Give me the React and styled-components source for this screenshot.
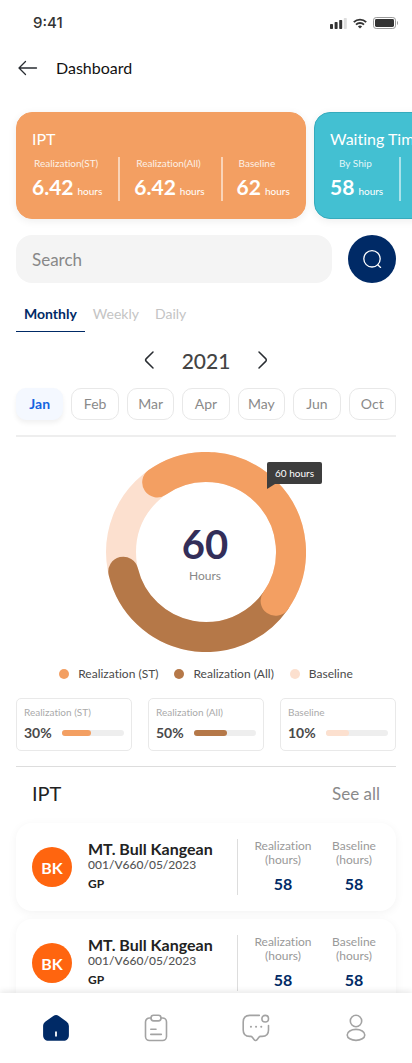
import React, { useState } from "react";
import styled, { createGlobalStyle } from "styled-components";

const GlobalStyle = createGlobalStyle`
  *, *::before, *::after { box-sizing: border-box; }
  body { margin: 0; background: #fff; font-variant-ligatures: none; }
  body, button, input { font-family: Lato, "Liberation Sans", sans-serif; }
  h1, h2, h3, p, ul, figure { margin: 0; padding: 0; font-weight: 400; }
  ul { list-style: none; }
  button { border: 0; background: none; padding: 0; cursor: pointer; color: inherit; }
  svg { display: block; }
`;

const NAVY = "#002a66";
const ORANGE = "#f39f62";
const BROWN = "#b57848";
const PEACH = "#fce0cf";

const Screen = styled.div`
  height: 100vh;
  display: flex;
  flex-direction: column;
  overflow: hidden;
`;

const StatusBar = styled.div`
  display: flex;
  justify-content: space-between;
  align-items: center;
  height: 46px;
  padding: 0 14px 0 33px;
  color: #333;
  font: 500 15px/20px Inter, sans-serif;
  flex: none;
`;

const StatusIcons = styled.div`
  display: flex;
  align-items: center;
  gap: 6px;
`;

const Header = styled.header`
  display: flex;
  align-items: center;
  gap: 18px;
  height: 44px;
  padding: 0 18px;
  flex: none;
`;

const Title = styled.h1`
  font-size: 16px;
  line-height: 24px;
  color: #111;
`;

const Content = styled.main`
  flex: 1;
  min-height: 0;
  overflow-y: auto;
  scrollbar-width: none;
  display: flex;
  flex-direction: column;
  padding: 10px 0 16px;
  & > * { flex: none; }
`;

const Cards = styled.section`
  display: flex;
  gap: 8px;
  overflow-x: auto;
  scrollbar-width: none;
  padding: 12px 16px;
`;

const SummaryCard = styled.article`
  flex: none;
  min-width: 290px;
  height: 107px;
  padding: 14px 15px;
  border-radius: 16px;
  color: #fff;
  background: ${(p) => p.$color};
  border: 1px solid ${(p) => p.$edge};
  box-shadow: 0 2px 8px rgba(0, 0, 0, 0.07);
`;

const CardTitle = styled.h2`
  font-size: 16px;
  line-height: 24px;
`;

const Metrics = styled.div`
  display: flex;
  margin-top: 6px;
`;

const Metric = styled.div`
  height: 44px;
  padding-right: 16px;
  & + & {
    border-left: 2px solid rgba(255, 255, 255, 0.55);
    padding-left: 14px;
  }
  &:last-child { padding-right: 0; }
`;

const MetricLabel = styled.p`
  font-size: 10px;
  line-height: 12px;
  padding-left: ${(p) => p.$indent || 2}px;
  opacity: 0.85;
`;

const MetricValue = styled.p`
  display: flex;
  align-items: baseline;
  gap: 4px;
  margin-top: 6px;
  font-size: 10px;
  line-height: 24px;
  white-space: nowrap;
  strong { font-size: 21px; font-weight: 700; }
`;

const SearchRow = styled.form`
  display: flex;
  gap: 16px;
  padding: 4px 16px 0;
`;

const SearchInput = styled.input`
  flex: 1;
  min-width: 0;
  height: 48px;
  padding: 0 16px;
  border: 0;
  border-radius: 16px;
  background: #f4f4f4;
  font-size: 17px;
  color: #444;
  outline: none;
  &::placeholder { color: #888; opacity: 1; }
`;

const SearchButton = styled.button`
  display: grid;
  place-items: center;
  width: 48px;
  height: 48px;
  border-radius: 50%;
  background: ${NAVY};
`;

const Tabs = styled.div`
  display: flex;
  padding: 14px 16px 0;
`;

const Tab = styled.button`
  height: 35px;
  padding: 0 8px;
  font-size: 14px;
  line-height: 34px;
  font-weight: ${(p) => (p.$active ? 700 : 400)};
  color: ${(p) => (p.$active ? NAVY : "#c4c4c4")};
  border-bottom: 1px solid ${(p) => (p.$active ? NAVY : "transparent")};
`;

const YearPicker = styled.div`
  display: flex;
  align-items: center;
  justify-content: center;
  gap: 27px;
  height: 56px;
`;

const Year = styled.span`
  font-size: 21px;
  font-weight: 500;
  color: #444;
`;

const Months = styled.div`
  display: grid;
  grid-template-columns: repeat(7, 1fr);
  gap: 8px;
  margin: 0 16px;
  padding-bottom: 15px;
  border-bottom: 2px solid #eee;
`;

const Month = styled.button`
  height: 32px;
  border-radius: 10px;
  padding-bottom: 2px;
  font-size: 14px;
  font-weight: ${(p) => (p.$active ? 700 : 400)};
  color: ${(p) => (p.$active ? "#1463e0" : "#8a8a8a")};
  background: ${(p) => (p.$active ? "#f4f8ff" : "#fff")};
  border: 1px solid ${(p) => (p.$active ? "#f4f8ff" : "#e8e8e8")};
  box-shadow: ${(p) => (p.$active ? "0 3px 5px rgba(0, 0, 0, 0.06)" : "none")};
`;

const Donut = styled.figure`
  position: relative;
  align-self: center;
  width: 200px;
  height: 200px;
  margin-top: 15px;
`;

const DonutCenter = styled.figcaption`
  position: absolute;
  inset: 0;
  display: flex;
  flex-direction: column;
  align-items: center;
  justify-content: center;
  padding-right: 2px;
  font-size: 12px;
  line-height: 16px;
  color: #888;
  strong { font-size: 40px; line-height: 48px; color: #332e59; }
`;

const Tooltip = styled.div`
  position: absolute;
  left: 161px;
  top: 10px;
  width: 55px;
  height: 22px;
  border-radius: 2px 2px 2px 0;
  background: #3d3d3d;
  color: #fff;
  font-size: 10px;
  line-height: 22px;
  text-align: center;
  &::after {
    content: "";
    position: absolute;
    left: 0;
    top: 100%;
    border-top: 5px solid #3d3d3d;
    border-right: 8px solid transparent;
  }
`;

const Legend = styled.ul`
  display: flex;
  justify-content: center;
  gap: 16px;
  padding-top: 14px;
  font-size: 12px;
  line-height: 16px;
  color: #4a4a4a;
  li { display: flex; align-items: center; gap: 9px; }
`;

const Dot = styled.span`
  width: 10px;
  height: 10px;
  border-radius: 50%;
  background: ${(p) => p.$color};
`;

const Stats = styled.section`
  display: grid;
  grid-template-columns: repeat(3, 1fr);
  gap: 16px;
  margin: 16px 16px 0;
  padding-bottom: 15px;
  border-bottom: 1px solid #ddd;
`;

const StatCard = styled.div`
  height: 53px;
  padding: 6px 7px;
  border: 1px solid #e9e9e9;
  border-radius: 5px;
`;

const StatLabel = styled.p`
  font-size: 10px;
  line-height: 14px;
  color: #aaa;
`;

const StatRow = styled.div`
  display: flex;
  align-items: center;
  gap: 8px;
  margin-top: 4px;
  font-size: 14px;
  line-height: 20px;
  color: #4a4a4a;
  strong { min-width: 30px; }
`;

const Track = styled.div`
  flex: 1;
  height: 6px;
  border-radius: 3px;
  background: #eee;
`;

const Fill = styled.div`
  height: 100%;
  border-radius: 3px;
  background: ${(p) => p.$color};
`;

const ListHeader = styled.div`
  display: flex;
  justify-content: space-between;
  align-items: center;
  height: 56px;
  padding: 0 32px 4px;
  h2 { font-size: 20px; color: #222; }
`;

const SeeAll = styled.a`
  font-size: 17px;
  color: #8a8a8a;
  text-decoration: none;
`;

const ShipList = styled.ul`
  display: flex;
  flex-direction: column;
  gap: 8px;
  padding: 0 16px;
`;

const ShipCard = styled.li`
  display: flex;
  align-items: center;
  height: 88px;
  padding: 0 16px;
  border-radius: 16px;
  background: #fff;
  box-shadow: 0 2px 10px rgba(0, 0, 0, 0.05);
`;

const Avatar = styled.div`
  display: grid;
  place-items: center;
  width: 40px;
  height: 40px;
  border-radius: 50%;
  background: #ff650f;
  color: #fff;
  font-size: 16px;
  font-weight: 700;
  flex: none;
`;

const ShipInfo = styled.div`
  flex: 1;
  padding: 0 0 2px 16px;
  white-space: nowrap;
  color: #222;
  h3 { font-size: 16px; line-height: 17px; font-weight: 700; }
  p { font-size: 12px; line-height: 16px; color: #555; font-weight: 500; }
  strong { display: block; margin-top: 2px; font-size: 12px; line-height: 18px; }
`;

const Readings = styled.div`
  display: flex;
  gap: 15px;
  height: 56px;
  padding-left: 15px;
  border-left: 1px solid #ddd;
`;

const Reading = styled.div`
  width: ${(p) => p.$width}px;
  text-align: center;
  font-size: 12px;
  line-height: 14px;
  color: #999;
  strong { display: block; margin-top: 7px; font-size: 16px; line-height: 20px; color: ${NAVY}; }
`;

const BottomNav = styled.nav`
  position: relative;
  display: flex;
  flex: none;
  height: 70px;
  padding: 0 6px;
  background: #fff;
  box-shadow: 0 -2px 6px rgba(0, 0, 0, 0.09);
`;

const NavItem = styled.button`
  flex: 1;
  display: grid;
  place-items: center;
`;

const cards = [
  {
    title: "IPT", color: ORANGE, edge: ORANGE,
    metrics: [["Realization(ST)", "6.42"], ["Realization(All)", "6.42"], ["Baseline", "62"]],
  },
  {
    title: "Waiting Time", color: "#43c0d2", edge: "#35abbd",
    metrics: [["By Ship", "58", 9]],
  },
];

const series = [
  { name: "Realization (ST)", percent: "30%", fill: 47, color: ORANGE },
  { name: "Realization (All)", percent: "50%", fill: 53, color: BROWN },
  { name: "Baseline", percent: "10%", fill: 37, color: PEACH },
];

const ships = [1, 2].map((id) => ({
  id, initials: "BK", name: "MT. Bull Kangean", code: "001/V660/05/2023", type: "GP", realization: 58, baseline: 58,
}));

const SignalIcon = () => (
  <svg width="17" height="11" viewBox="0 0 17 11" fill="#333">
    <rect x="0" y="6" width="3" height="5" rx=".7" />
    <rect x="4.6" y="4" width="3" height="7" rx=".7" />
    <rect x="9.2" y="2" width="3" height="9" rx=".7" />
    <rect x="13.8" y="0" width="3" height="11" rx=".7" fill="#ddd" />
  </svg>
);

const WifiIcon = () => (
  <svg width="14" height="11" viewBox="0 0 14 11" fill="none" stroke="#333" strokeWidth="1.9">
    <path d="M.8 4.1a9 9 0 0 1 12.4 0" />
    <path d="M3 6.6a5.8 5.8 0 0 1 8 0" />
    <path d="M7 10.6 4.9 8.5a3 3 0 0 1 4.2 0z" fill="#333" stroke="none" />
  </svg>
);

const BatteryIcon = () => (
  <svg width="25" height="12" viewBox="0 0 25 12">
    <rect x=".5" y=".5" width="22" height="11" rx="2.7" fill="none" stroke="#999" />
    <rect x="2" y="2" width="19" height="8" rx="1.4" fill="#333" />
    <path d="M24 4v4c.6-.3 1-1.1 1-2s-.4-1.7-1-2z" fill="#999" />
  </svg>
);

const BackIcon = () => (
  <svg width="20" height="16" viewBox="0 0 20 16" fill="none" stroke="#292d32" strokeWidth="1.3" strokeLinecap="round" strokeLinejoin="round">
    <path d="M7.5 1.5 1 8l6.500 6.500M1.200 8H18.500" />
  </svg>
);

const SearchIcon = () => (
  <svg width="20" height="20" viewBox="0 0 20 20" fill="none" stroke="#fff" strokeWidth="1.3" strokeLinecap="round">
    <circle cx="10" cy="9.8" r="8.2" />
    <path d="m15.900 15.900 2.700 2.500" />
  </svg>
);

const ChevronIcon = ({ right }) => (
  <svg width="12" height="20" viewBox="0 0 12 20" fill="none" stroke="#292d32" strokeWidth="1.5" strokeLinecap="round" strokeLinejoin="round">
    <path d={right ? "m2 2 6.700 6.600c.8.8.8 2 0 2.800L2 18" : "M10 2 3.300 8.600c-.8.8-.8 2 0 2.800L10 18"} />
  </svg>
);

const HomeIcon = () => (
  <svg width="26" height="26" viewBox="0 0 26 26">
    <path fill={NAVY} d="M10.300 1.100a4.600 4.600 0 0 1 5.500 0l7.600 5.300A5.400 5.400 0 0 1 25.900 11v9.200c0 3.300-2.200 5.600-5.400 5.600h-15C2.300 25.800.1 23.500.1 20.200V11c0-1.900.9-3.500 2.400-4.600z" />
    <path d="M13 16.500v5" stroke="#fff" strokeWidth="1.8" />
  </svg>
);

const ClipboardIcon = () => (
  <svg width="24" height="28" viewBox="0 0 24 28" fill="none" stroke="#a3a3a3" strokeWidth="1.6" strokeLinecap="round" strokeLinejoin="round">
    <path d="M7 4H5.500A4 4 0 0 0 1.500 8v14.500a4 4 0 0 0 4 4h13a4 4 0 0 0 4-4V8a4 4 0 0 0-4-4H17" />
    <rect x="7" y="1.3" width="10" height="5.6" rx="2.6" />
    <path d="M6.800 15.300H12M6.800 20.400h10.500" />
  </svg>
);

const MessageIcon = () => (
  <svg width="28" height="28" viewBox="0 0 28 28" fill="none" stroke="#a3a3a3" strokeWidth="1.6" strokeLinecap="round" strokeLinejoin="round">
    <path d="M17.300 1.400H7.700c-4.300 0-6.500 2.200-6.500 6.500v8c0 4.300 2 6.500 6.500 6.500h1c.7 0 1.200.3 1.600.8l1.900 2.500c.8 1.100 2 1.100 2.800 0l1.900-2.500c.4-.5 1-.8 1.600-.8h1.600c4.300 0 6.400-2.200 6.400-6.500v-4.300" />
    <circle cx="23.2" cy="4.7" r="3.3" />
    <path d="M8.900 12.800h.1M14 12.800h.1M19.200 12.800h.1" strokeWidth="2" />
  </svg>
);

const ProfileIcon = () => (
  <svg width="20" height="28" viewBox="0 0 20 28" fill="none" stroke="#a3a3a3" strokeWidth="1.6">
    <circle cx="10" cy="7" r="5.7" />
    <ellipse cx="10" cy="20.9" rx="8.8" ry="5.5" />
  </svg>
);

const HoursDonut = () => (
  <Donut>
    <svg width="200" height="200" viewBox="0 0 200 200" fill="none" strokeWidth="30" strokeLinecap="round">
      <circle cx="100" cy="100" r="85" stroke={PEACH} />
      <path d="M169.600 148.800A85 85 0 0 1 17.300 119.700" stroke={BROWN} />
      <path d="M51.200 30.400A85 85 0 0 1 169.600 148.800" stroke={ORANGE} />
    </svg>
    <DonutCenter>
      <strong>60</strong>
      <span>Hours</span>
    </DonutCenter>
    <Tooltip role="tooltip">60 hours</Tooltip>
  </Donut>
);

const NextMetric = styled(Metric)`
  width: 72px;
`;

export default function App() {
  const [period, setPeriod] = useState("Monthly");
  const [month, setMonth] = useState("Jan");
  const [year, setYear] = useState(2021);

  return (
    <Screen>
      <GlobalStyle />
      <StatusBar>
        <span>9:41</span>
        <StatusIcons><SignalIcon /><WifiIcon /><BatteryIcon /></StatusIcons>
      </StatusBar>
      <Header>
        <button aria-label="Back"><BackIcon /></button>
        <Title>Dashboard</Title>
      </Header>
      <Content>
        <Cards>
          {cards.map((card) => (
            <SummaryCard key={card.title} $color={card.color} $edge={card.edge}>
              <CardTitle>{card.title}</CardTitle>
              <Metrics>
                {card.metrics.map(([label, value, indent]) => (
                  <Metric as="div" key={label}>
                    <MetricLabel $indent={indent}>{label}</MetricLabel>
                    <MetricValue><strong>{value}</strong>hours</MetricValue>
                  </Metric>
                ))}
                {card.metrics.length === 1 && <NextMetric />}
              </Metrics>
            </SummaryCard>
          ))}
        </Cards>
        <SearchRow onSubmit={(e) => e.preventDefault()}>
          <SearchInput type="text" placeholder="Search" aria-label="Search" />
          <SearchButton type="submit" aria-label="Submit search"><SearchIcon /></SearchButton>
        </SearchRow>
        <Tabs role="tablist">
          {["Monthly", "Weekly", "Daily"].map((name) => (
            <Tab key={name} role="tab" aria-selected={name === period} $active={name === period} onClick={() => setPeriod(name)}>
              {name}
            </Tab>
          ))}
        </Tabs>
        <YearPicker>
          <button aria-label="Previous year" onClick={() => setYear(year - 1)}><ChevronIcon /></button>
          <Year>{year}</Year>
          <button aria-label="Next year" onClick={() => setYear(year + 1)}><ChevronIcon right /></button>
        </YearPicker>
        <Months>
          {["Jan", "Feb", "Mar", "Apr", "May", "Jun", "Oct"].map((name) => (
            <Month key={name} $active={name === month} aria-pressed={name === month} onClick={() => setMonth(name)}>
              {name}
            </Month>
          ))}
        </Months>
        <HoursDonut />
        <Legend>
          {series.map((s) => (
            <li key={s.name}><Dot $color={s.color} />{s.name}</li>
          ))}
        </Legend>
        <Stats>
          {series.map((s) => (
            <StatCard key={s.name}>
              <StatLabel>{s.name}</StatLabel>
              <StatRow>
                <strong>{s.percent}</strong>
                <Track><Fill $color={s.color} style={{ width: `${s.fill}%` }} /></Track>
              </StatRow>
            </StatCard>
          ))}
        </Stats>
        <ListHeader>
          <h2>IPT</h2>
          <SeeAll href="#ipt">See all</SeeAll>
        </ListHeader>
        <ShipList>
          {ships.map((ship) => (
            <ShipCard key={ship.id}>
              <Avatar>{ship.initials}</Avatar>
              <ShipInfo>
                <h3>{ship.name}</h3>
                <p>{ship.code}</p>
                <strong>{ship.type}</strong>
              </ShipInfo>
              <Readings>
                <Reading $width={60}>Realization (hours)<strong>{ship.realization}</strong></Reading>
                <Reading $width={52}>Baseline (hours)<strong>{ship.baseline}</strong></Reading>
              </Readings>
            </ShipCard>
          ))}
        </ShipList>
      </Content>
      <BottomNav aria-label="Main">
        <NavItem aria-label="Home" aria-current="page"><HomeIcon /></NavItem>
        <NavItem aria-label="Tasks"><ClipboardIcon /></NavItem>
        <NavItem aria-label="Messages"><MessageIcon /></NavItem>
        <NavItem aria-label="Profile"><ProfileIcon /></NavItem>
      </BottomNav>
    </Screen>
  );
}
